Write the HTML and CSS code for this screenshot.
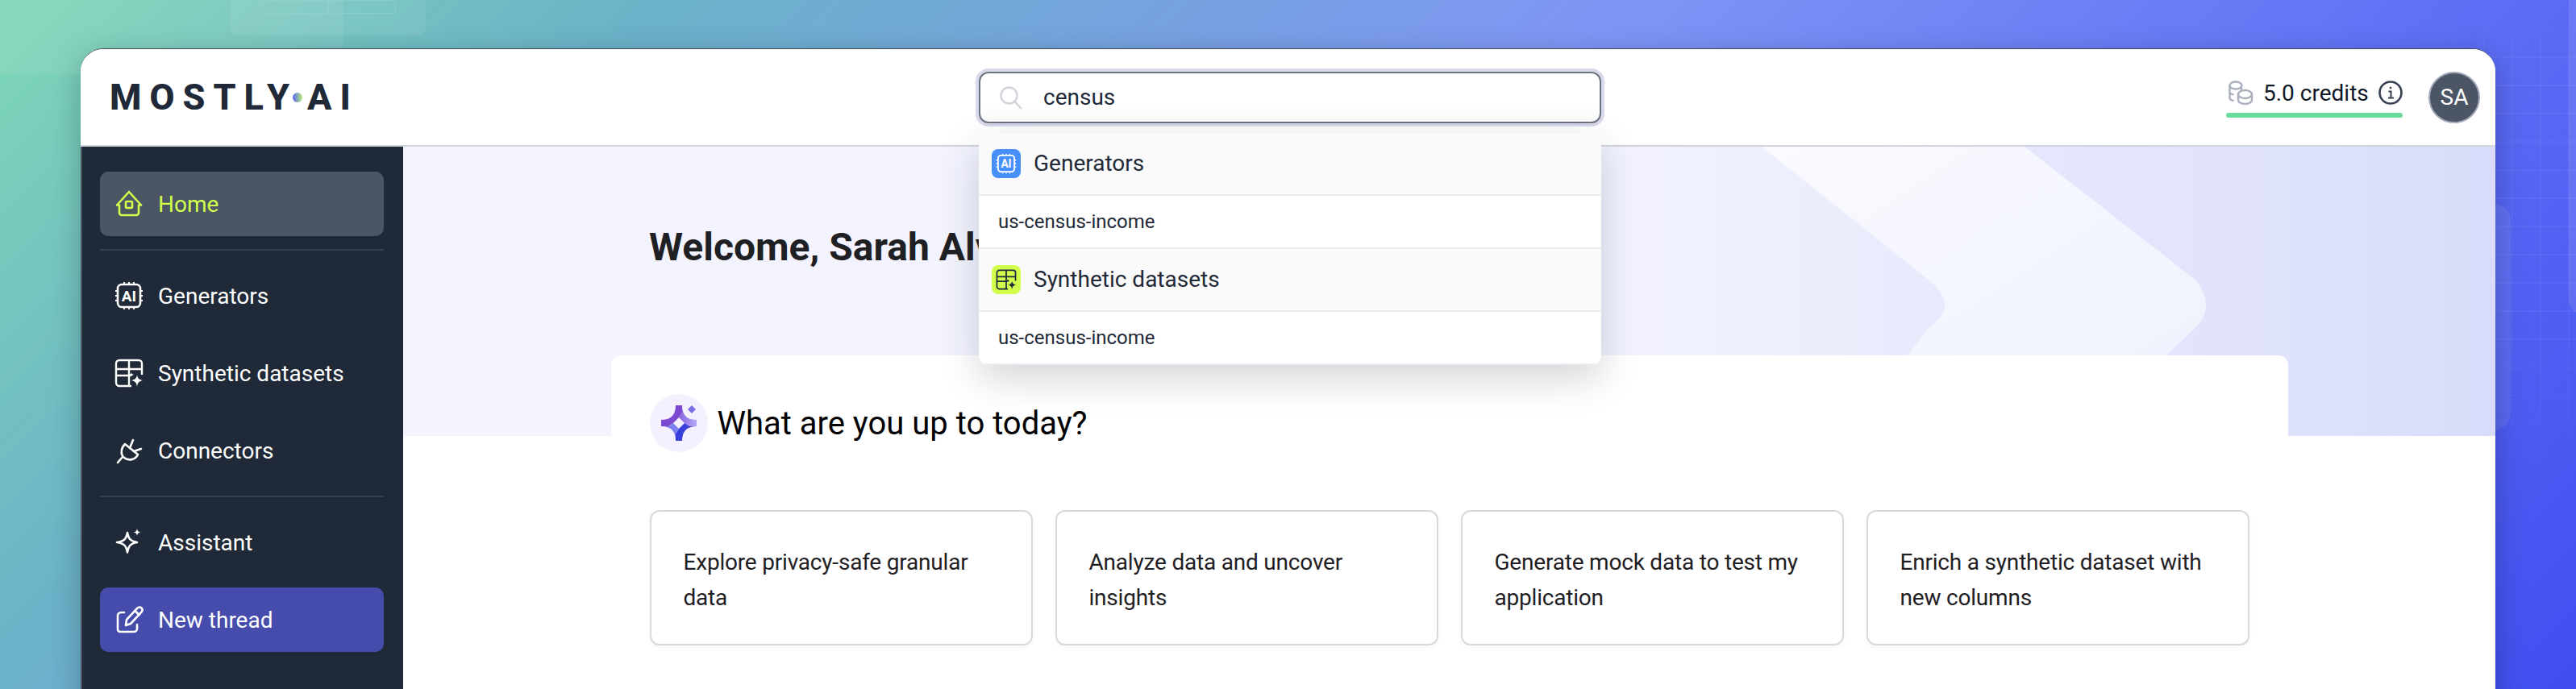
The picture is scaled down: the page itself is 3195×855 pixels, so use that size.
FILE: index.html
```html
<!DOCTYPE html>
<html>
  <head>
    <title>MOSTLY AI</title>
    <link rel="stylesheet" href="styles.css">
  </head>

  <body>
    <svg class="defs" width="0" height="0">
      <symbol id="chip" viewBox="0 0 36 36">
        <rect x="4" y="4" width="28" height="28" rx="5" fill="none" stroke="currentColor" stroke-width="2.6"/>
        <path d="M12 1v3M18 1v3M24 1v3M12 32v3M18 32v3M24 32v3M1 12h3M1 18h3M1 24h3M32 12h3M32 18h3M32 24h3" stroke="currentColor" stroke-width="2"/>
        <text x="18" y="25" text-anchor="middle" font-family="Roboto, sans-serif" font-weight="700" font-size="19" fill="currentColor">AI</text>
      </symbol>
      <symbol id="table" viewBox="0 0 36 36">
        <path d="M21 34H6a4 4 0 0 1-4-4V6a4 4 0 0 1 4-4h24a4 4 0 0 1 4 4v14M2 13h32M18 2v32M18 13v8M2 21h18" fill="none" stroke="currentColor" stroke-width="2.4"/>
        <path d="M28 20c.6 4 2.2 6 7 7-4.800 1-6.400 3-7 8-.6-5-2.200-7-7-8 4.800-1 6.400-3 7-7z" fill="currentColor"/>
        <path d="M21 17c.3 1.800 1 2.500 3 3-2 .5-2.700 1.200-3 3-.3-1.800-1-2.500-3-3 2-.5 2.700-1.200 3-3z" fill="currentColor"/>
      </symbol>
    </svg>

    <div class="bg_glow"></div>
    <div class="bg_ghost"><div class="bg_ghost_key"></div><div class="bg_ghost_key"></div></div>
    <div class="bg_grid"></div>
    <div class="bg_side"></div>
    <div class="bg_edge"></div>

    <div class="app">
      <div class="top_bar">
        <div class="logo">
          <span>MOSTLY</span>
          <i class="logo_dot"></i>
          <span>AI</span>
        </div>

        <div class="search_wrap">
          <div class="search_box">
            <svg class="search_icon" viewBox="0 0 28 28" fill="none" stroke="#d1d5db" stroke-width="2.400">
              <circle cx="11.500" cy="11.500" r="10"/>
              <path d="M18.500 19l8 8.500" stroke-linecap="round"/>
            </svg>
            <span>census</span>
          </div>

          <div class="drop">
            <div class="drop_head">
              <span class="drop_icon drop_icon_blue"><svg><use href="#chip"/></svg></span>
              Generators
            </div>
            <div class="drop_row">us-census-income</div>
            <div class="drop_head">
              <span class="drop_icon drop_icon_lime"><svg><use href="#table"/></svg></span>
              Synthetic datasets
            </div>
            <div class="drop_row">us-census-income</div>
          </div>
        </div>

        <div class="top_right">
          <div class="credits">
            <div class="credits_row">
              <svg class="coins" viewBox="0 0 32 30" fill="none" stroke="#a9afbc" stroke-width="2.400">
                <ellipse cx="10" cy="6" rx="7.500" ry="4.500"/>
                <path d="M2.500 6v15c0 2 2 3.500 5 4M2.500 13.500c0 2 2 3.500 5 4"/>
                <path d="M17 7v5"/>
                <ellipse cx="21.500" cy="17" rx="8.500" ry="5"/>
                <path d="M13 17v7c0 2.800 3.800 5 8.500 5s8.500-2.200 8.500-5v-7"/>
              </svg>
              <span>5.0 credits</span>
              <svg class="info" viewBox="0 0 30 30" fill="none" stroke="#374151" stroke-width="2.600">
                <circle cx="15" cy="15" r="13.500"/>
                <path d="M12.500 13.500H15.500V21M12 21.500h7" stroke-width="2"/>
                <circle cx="15" cy="9" r="1" fill="#374151" stroke-width="1"/>
              </svg>
            </div>
            <div class="credits_bar"></div>
          </div>
          <div class="avatar">SA</div>
        </div>
      </div>

      <div class="below">
        <div class="side">
          <div class="side_item side_item_home">
            <svg class="side_icon" viewBox="0 0 36 36" fill="none" stroke="currentColor" stroke-width="2.600">
              <path d="M18 3L33 19.500H30V29a3 3 0 0 1-3 3H9a3 3 0 0 1-3-3V19.500H3z" stroke-linejoin="round"/>
              <rect x="14" y="15" width="8" height="8" rx="1"/>
            </svg>
            Home
          </div>
          <div class="side_line"></div>
          <div class="side_item">
            <svg class="side_icon"><use href="#chip"/></svg>
            Generators
          </div>
          <div class="side_item">
            <svg class="side_icon"><use href="#table"/></svg>
            Synthetic datasets
          </div>
          <div class="side_item">
            <svg class="side_icon" viewBox="0 0 36 36" fill="none" stroke="currentColor" stroke-width="2.600" stroke-linecap="round" stroke-linejoin="round">
              <path d="M4 33l6-7"/>
              <path d="M13 10L29 23C26 30 17 31 12 27C7 23 8 15 13 10Z"/>
              <path d="M19 15l4-10M24 19l9-3"/>
            </svg>
            Connectors
          </div>
          <div class="side_line"></div>
          <div class="side_item">
            <svg class="side_icon" viewBox="0 0 36 36" fill="none" stroke="currentColor" stroke-width="2.600" stroke-linejoin="round">
              <path d="M16 6c1.500 8 4 10.500 12 12-8 1.500-10.500 4-12 12.500C14.500 22 12 19.500 3 18c9-1.500 11.500-4 13-12z"/>
              <path d="M28 1c.5 3 1.500 4 4.500 4.500-3 .5-4 1.500-4.500 4.500-.5-3-1.500-4-4.500-4.500 3-.5 4-1.500 4.500-4.500z" fill="currentColor" stroke="none"/>
            </svg>
            Assistant
          </div>
          <div class="side_item side_item_new">
            <svg class="side_icon" viewBox="0 0 36 36" fill="none" stroke="currentColor" stroke-width="2.600" stroke-linecap="round" stroke-linejoin="round">
              <path d="M12 9H8a4 4 0 0 0-4 4v17a3 3 0 0 0 3 3h17a4 4 0 0 0 4-4v-5"/>
              <path d="M14 25l1-7L28 4c2-2 4-2 5.500-.5s1.500 3.500-.5 5.500L20 23z"/>
              <path d="M25.500 7l5 5"/>
            </svg>
            New thread
          </div>
        </div>

        <div class="main">
          <div class="hero">
            <svg class="hero_shape" viewBox="0 0 2595 359">
              <defs>
                <linearGradient id="band" x1="0" y1="0" x2="1" y2="1">
                  <stop offset="0" stop-color="#fafaff"/>
                  <stop offset="1" stop-color="#eef1fd"/>
                </linearGradient>
              </defs>
              <path d="M1685 0H2011L2224 166Q2248 198 2224 224L2080 359H1790L1893 224Q1931 198 1893 166Z" fill="url(#band)"/>
            </svg>
            <h1 class="hero_title">Welcome, Sarah Alvarez</h1>
          </div>

          <div class="panel">
            <div class="panel_head">
              <div class="spark">
                <svg viewBox="0 0 44 44" width="44" height="44">
                  <defs>
                    <linearGradient id="spark_tr" x1="0" y1="0" x2="1" y2="0">
                      <stop offset="0" stop-color="#8a63db"/>
                      <stop offset="1" stop-color="#b3aaf7"/>
                    </linearGradient>
                  </defs>
                  <path d="M18 0H26V9L22 15L15 22L9 26H0V18Q18 18 18 0Z" fill="#7d49d0"/>
                  <path d="M26 0Q26 18 44 18V26H35L29 22L22 15L26 9Z" fill="url(#spark_tr)"/>
                  <path d="M44 26Q26 26 26 44H18V35L22 29L29 22L35 26Z" fill="#3b3fdc"/>
                  <path d="M18 44Q18 26 0 26H9L15 22L22 29L18 35V44Z" fill="#7d81ef"/>
                  <path d="M39 0L44 5L39 10L34 5Z" transform="translate(-1 0)" fill="#7c6ee6"/>
                </svg>
              </div>
              <h2 class="panel_title">What are you up to today?</h2>
            </div>

            <div class="cards">
              <div class="card">Explore privacy-safe granular data</div>
              <div class="card">Analyze data and uncover insights</div>
              <div class="card">Generate mock data to test my application</div>
              <div class="card">Enrich a synthetic dataset with new columns</div>
            </div>
          </div>
        </div>
      </div>
    </div>
  </body>
</html>
```

FILE: styles.css
```css
* {
  box-sizing: border-box;
  font-family: Roboto, Arial, sans-serif;
}

h1,
h2 {
  margin: 0;
}

html,
body {
  height: 100%;
}

body {
  margin: 0;
  overflow: hidden;
  position: relative;
  padding: 60px 100px 0;
  background: linear-gradient(
    135deg,
    #7ed8b6 0%,
    #6bb2c8 20%,
    #7f95f5 50%,
    #6070f5 75%,
    #404ef0 100%
  );
}

.defs {
  position: absolute;
}

/* backdrop pieces, faint shapes behind the window */
.bg_glow {
  position: absolute;
  top: 0;
  left: 0;
  width: 425px;
  height: 92px;
  background: #ffffff12;
}

.bg_ghost {
  position: absolute;
  top: 0;
  left: 285px;
  width: 243px;
  height: 44px;
  padding: 0 37px;
  display: flex;
  background: #ffffff12;
  border-radius: 0 0 8px 8px;
}

.bg_ghost_key {
  width: 86px;
  height: 17px;
  border: 1px solid #ffffff18;
}

.bg_grid {
  position: absolute;
  top: 0;
  right: 0;
  width: 255px;
  height: 600px;
  background-image: linear-gradient(#ffffff0b 2px, transparent 2px),
    linear-gradient(90deg, #ffffff0b 2px, transparent 2px);
  background-size: 35px 35px;
  -webkit-mask-image: linear-gradient(180deg, transparent, black 15%, black 70%, transparent);
  mask-image: linear-gradient(180deg, transparent, black 15%, black 70%, transparent);
}

.bg_side {
  position: absolute;
  top: 253px;
  left: 3060px;
  width: 54px;
  height: 280px;
  background: #ffffff14;
  border-radius: 20px;
}

.bg_edge {
  position: absolute;
  top: -20px;
  right: -30px;
  width: 39px;
  height: 410px;
  background: #ffffff1c;
  border-radius: 18px;
}

.app {
  position: relative;
  height: 900px;
  background-color: white;
  border-top: 1px solid #444a55;
  border-radius: 28px 28px 0 0;
  box-shadow: 0 10px 36px #00000040;
}

.top_bar {
  height: 121px;
  padding: 0 19px 0 36px;
  display: grid;
  grid-template-columns: 1078px 772px 1fr;
  align-items: center;
  background-color: white;
  border-bottom: 2px solid #d1d5db;
  border-radius: 28px 28px 0 0;
}

.logo {
  display: flex;
  align-items: center;
  color: #1f2937;
  font-family: Inter, sans-serif;
  font-weight: 800;
  font-size: 45px;
  letter-spacing: 10px;
  line-height: 1;
}

.logo_dot {
  width: 12px;
  height: 12px;
  margin: 0 6px 0 -6px;
  border-radius: 50%;
  background: linear-gradient(90deg, #5b63f5, #b8f27a);
}

.search_wrap {
  position: relative;
}

.search_box {
  height: 64px;
  padding-left: 24px;
  display: flex;
  align-items: center;
  gap: 26px;
  color: #1f2937;
  font-size: 28px;
  background: linear-gradient(#ffffff 60%, #fbfbfb);
  border: 2px solid #6b7280;
  border-radius: 12px;
  box-shadow: 0 0 0 4px #d9d9ec;
}

.search_icon {
  width: 28px;
  height: 28px;
}

.drop {
  position: absolute;
  top: 76px;
  left: 0;
  width: 100%;
  z-index: 5;
  background-color: white;
  border-radius: 12px;
  box-shadow: 0 16px 48px #1f293733;
  overflow: hidden;
}

.drop_head {
  height: 78px;
  padding-left: 16px;
  display: flex;
  align-items: center;
  gap: 16px;
  color: #1f2937;
  font-size: 28px;
  background-color: #fafafa;
  border-bottom: 2px solid #ecedf2;
}

.drop_icon {
  width: 36px;
  height: 36px;
  padding: 5px;
  border-radius: 8px;
}

.drop_icon svg {
  display: block;
  width: 26px;
  height: 26px;
}

.drop_icon_blue {
  color: white;
  background-color: #4790fb;
}

.drop_icon_lime {
  color: #1f2937;
  background-color: #d2ff4c;
}

.drop_row {
  height: 66px;
  padding-left: 24px;
  display: flex;
  align-items: center;
  color: #1f2937;
  font-size: 24px;
  border-bottom: 2px solid #ecedf2;
}

.top_right {
  display: flex;
  justify-content: flex-end;
  align-items: center;
  gap: 32px;
}

.credits {
  width: 219px;
  margin-top: 2px;
}

.credits_row {
  height: 36px;
  padding: 0 2px;
  display: flex;
  align-items: center;
  gap: 12px;
  color: #111827;
  font-size: 28px;
  white-space: nowrap;
}

.coins {
  width: 32px;
  height: 30px;
  flex: none;
}

.info {
  width: 30px;
  height: 30px;
  flex: none;
}

.credits_bar {
  height: 6px;
  margin-top: 7px;
  background-color: #69db9c;
  border-radius: 3px;
}

.avatar {
  width: 64px;
  height: 64px;
  display: flex;
  align-items: center;
  justify-content: center;
  color: white;
  font-size: 28px;
  background-color: #4b5563;
  border: 2px solid #a3a9b8;
  border-radius: 50%;
}

.below {
  display: flex;
}

.side {
  width: 400px;
  height: 800px;
  flex: none;
  padding: 31px 24px 0 22px;
  display: flex;
  flex-direction: column;
  gap: 16px;
  background-color: #1f2937;
  border-left: 2px solid #4b5563;
}

.side_item {
  height: 80px;
  padding-left: 18px;
  display: flex;
  align-items: center;
  flex: none;
  gap: 18px;
  color: white;
  font-size: 28px;
  border-radius: 10px;
}

.side_item_home {
  color: #d2ff4c;
  background-color: #4b5563;
}

.side_item_new {
  background-color: #454cab;
}

.side_icon {
  width: 36px;
  height: 36px;
  flex: none;
}

.side_line {
  height: 2px;
  flex: none;
  background-color: #374151;
}

.main {
  flex: 1;
  min-width: 0;
}

.hero {
  position: relative;
  height: 359px;
  padding: 95px 0 0 305px;
  background: linear-gradient(
    90deg,
    #f3f4fe 0%,
    #f1f2fe 60%,
    #e6e9fc 76%,
    #dfe2fb 90%,
    #d8dcfa 100%
  );
}

.hero_shape {
  position: absolute;
  top: 0;
  left: 0;
  width: 100%;
  height: 100%;
}

.hero_title {
  position: relative;
  color: #1f2023;
  font-size: 48px;
  font-weight: 700;
  line-height: 60px;
}

.panel {
  position: relative;
  width: 2080px;
  margin: -100px auto 0;
  padding: 48px;
  background-color: white;
  border-radius: 12px 12px 0 0;
}

.panel_head {
  display: flex;
  align-items: center;
  gap: 12px;
}

.spark {
  width: 72px;
  height: 72px;
  display: flex;
  align-items: center;
  justify-content: center;
  background-color: #f5f0fe;
  border-radius: 50%;
}

.panel_title {
  color: black;
  font-size: 40px;
  font-weight: 400;
}

.cards {
  margin-top: 72px;
  display: grid;
  grid-template-columns: repeat(4, 1fr);
  gap: 28px;
}

.card {
  height: 168px;
  padding: 41px 40px;
  color: #1f2023;
  font-size: 28px;
  line-height: 44px;
  letter-spacing: -0.2px;
  background-color: white;
  border: 2px solid #d9d9dc;
  border-radius: 12px;
  box-shadow: 0 2px 6px #0000000a;
}
```
